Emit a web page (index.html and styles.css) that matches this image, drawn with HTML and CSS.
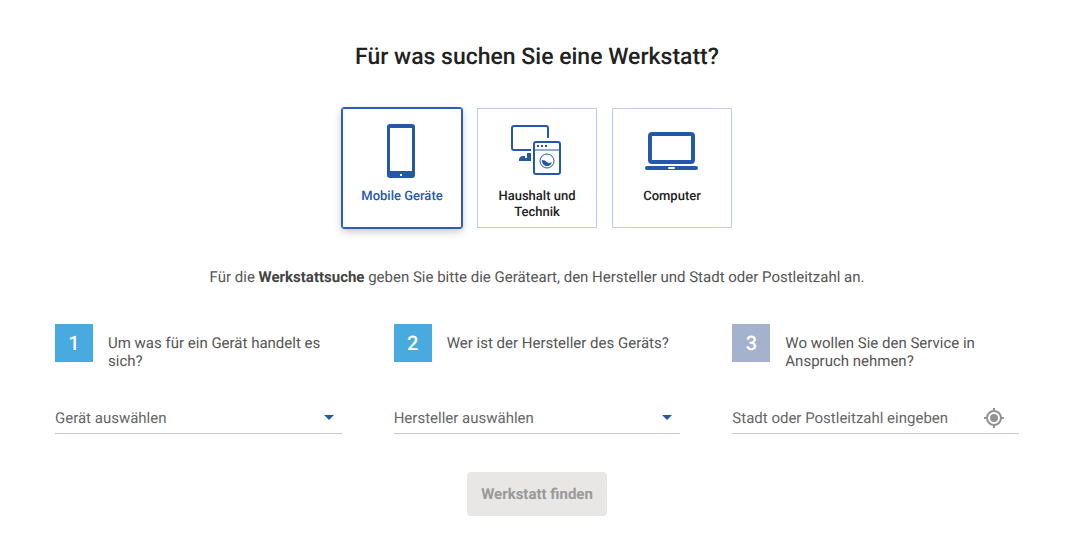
FILE: index.html
```html
<!DOCTYPE html>
<html lang="de">
<head>
    <meta charset="UTF-8">
    <meta name="viewport" content="width=device-width, initial-scale=1.0">
    <title>Werkstattsuche</title>
    <link rel="stylesheet" href="styles.css">
</head>
<body>
    <main class="finder">
        <h1>Für was suchen Sie eine Werkstatt?</h1>

        <div class="cards">
            <button type="button" class="card active" aria-pressed="true">
                <svg class="card-icon" viewBox="0 0 60 60" aria-hidden="true">
                    <path fill="#2559a8" fill-rule="evenodd" d="M18 3h22q3 0 3 3v48q0 3-3 3H18q-3 0-3-3V6q0-3 3-3zM18 7v43h22V7z"/>
                    <rect x="28" y="53" width="2" height="2" fill="#fff"/>
                </svg>
                <span>Mobile Geräte</span>
            </button>
            <button type="button" class="card" aria-pressed="false">
                <svg class="card-icon" viewBox="0 0 60 60" fill="none" stroke="#2559a8" stroke-width="2" aria-hidden="true">
                    <path d="M24 29H7q-2 0-2-2V7q0-2 2-2h32q2 0 2 2v10"/>
                    <path fill="#2559a8" stroke="none" d="M12 40v-2q1-3 4-3h2v2h2v-5h4v8z"/>
                    <rect x="27" y="21" width="26" height="32" rx="2"/>
                    <path d="M27 29h26" stroke-width="1"/>
                    <path d="M30 25h2M34 25h2M38 25h2"/>
                    <circle cx="40" cy="40" r="7" stroke-width="1"/>
                    <path fill="#2559a8" stroke="none" d="M35 39q3 0 5 2t5 0a5 5 0 0 1-10-2z"/>
                </svg>
                <span>Haushalt und Technik</span>
            </button>
            <button type="button" class="card" aria-pressed="false">
                <svg class="card-icon" viewBox="0 0 60 60" aria-hidden="true">
                    <rect x="8" y="13" width="43" height="28" rx="2" fill="none" stroke="#2559a8" stroke-width="4"/>
                    <rect x="3" y="45" width="53" height="4" rx="2" fill="#2559a8"/>
                    <rect x="26" y="46" width="7" height="2" rx="1" fill="#fff"/>
                </svg>
                <span>Computer</span>
            </button>
        </div>

        <p class="intro">Für die <strong>Werkstattsuche</strong> geben Sie bitte die Geräteart, den Hersteller und Stadt oder Postleitzahl an.</p>

        <form>
            <div class="steps">
                <div class="step">
                    <div class="question">
                        <span class="number">1</span>
                        <label for="device">Um was für ein Gerät handelt es sich?</label>
                    </div>
                    <div class="field">
                        <select id="device">
                            <option>Gerät auswählen</option>
                        </select>
                        <svg class="arrow" viewBox="0 0 10 5" aria-hidden="true"><path d="M0 0h10L5 5z"/></svg>
                    </div>
                </div>
                <div class="step">
                    <div class="question">
                        <span class="number">2</span>
                        <label for="brand">Wer ist der Hersteller des Geräts?</label>
                    </div>
                    <div class="field">
                        <select id="brand">
                            <option>Hersteller auswählen</option>
                        </select>
                        <svg class="arrow" viewBox="0 0 10 5" aria-hidden="true"><path d="M0 0h10L5 5z"/></svg>
                    </div>
                </div>
                <div class="step">
                    <div class="question">
                        <span class="number inactive">3</span>
                        <label for="place">Wo wollen Sie den Service in Anspruch nehmen?</label>
                    </div>
                    <div class="field">
                        <input type="text" id="place" placeholder="Stadt oder Postleitzahl eingeben">
                        <button type="button" class="locate" aria-label="Standort verwenden">
                            <svg viewBox="0 0 22 22" fill="none" stroke="#929292" stroke-width="2" aria-hidden="true">
                                <circle cx="11" cy="11" r="7"/>
                                <circle cx="11" cy="11" r="4" fill="#929292" stroke="none"/>
                                <path d="M11 1v3M11 18v3M1 11h3M18 11h3"/>
                            </svg>
                        </button>
                    </div>
                </div>
            </div>
            <button type="submit" class="submit" disabled>Werkstatt finden</button>
        </form>
    </main>
</body>
</html>
```
FILE: styles.css
```css
*{
    box-sizing: border-box;
}
body{
    margin: 0;
    background: #fff;
    color: #555;
    font-family: Roboto, "Liberation Sans", sans-serif;
    font-size: 15px;
    line-height: 18px;
    text-rendering: geometricPrecision;
}
button, input, select{
    font: inherit;
    color: inherit;
    text-rendering: inherit;
}
.finder{
    padding: 41px 51px 16px 55px;
}
h1{
    margin: 0;
    color: #222;
    font-size: 23px;
    font-weight: 500;
    line-height: 32px;
    text-align: center;
}
.cards{
    display: flex;
    justify-content: center;
    gap: 15px;
    margin-top: 35px;
}
.card{
    display: flex;
    flex-direction: column;
    align-items: center;
    gap: 8px;
    width: 120px;
    height: 120px;
    padding: 12px 8px;
    border: 1px solid #bccdec;
    background: #fff;
    color: #222;
    font-size: 13px;
    font-weight: 500;
    line-height: 16px;
    cursor: pointer;
}
.card.active{
    border-color: #2f5bbd;
    border-radius: 2px;
    outline: 1px solid #2f5bbd;
    box-shadow: 0 3px 8px rgba(0, 0, 0, 0.25);
    color: #2559a8;
}
.card-icon{
    flex: none;
    width: 60px;
    height: 60px;
}
.intro{
    margin: 40px 0 0;
    text-align: center;
}
.intro strong{
    color: #444;
}
.steps{
    display: grid;
    grid-template-columns: repeat(3, 1fr);
    gap: 52px;
    margin-top: 38px;
}
.step{
    display: flex;
    flex-direction: column;
    justify-content: space-between;
    gap: 32px;
}
.question{
    display: flex;
    align-items: flex-start;
    gap: 15px;
}
.question label{
    padding-top: 10px;
}
.number{
    flex: none;
    width: 38px;
    background: #49aae0;
    color: #fff;
    font-size: 20px;
    font-weight: 500;
    line-height: 38px;
    text-align: center;
}
.number.inactive{
    background: #a4b2cd;
}
.field{
    display: flex;
    align-items: center;
    height: 32px;
    border-bottom: 1px solid #c5c8e0;
}
.field select,
.field input{
    flex: 1;
    min-width: 0;
    height: 100%;
    padding: 1px 0 0;
    border: 0;
    background: none;
    appearance: none;
}
.field input::placeholder{
    color: #666;
    opacity: 1;
}
.field select{
    color: #666;
}
.arrow{
    width: 10px;
    height: 5px;
    margin-right: 8px;
    fill: #2559a8;
    pointer-events: none;
}
.locate{
    width: 22px;
    height: 22px;
    margin-right: 14px;
    padding: 0;
    border: 0;
    background: none;
    cursor: pointer;
}
.locate svg{
    display: block;
}
.submit{
    display: block;
    margin: 38px auto 0;
    padding: 13px 14px;
    border: 0;
    border-radius: 4px;
    background: #e8e7e6;
    color: #999;
    font-weight: 700;
}
```
